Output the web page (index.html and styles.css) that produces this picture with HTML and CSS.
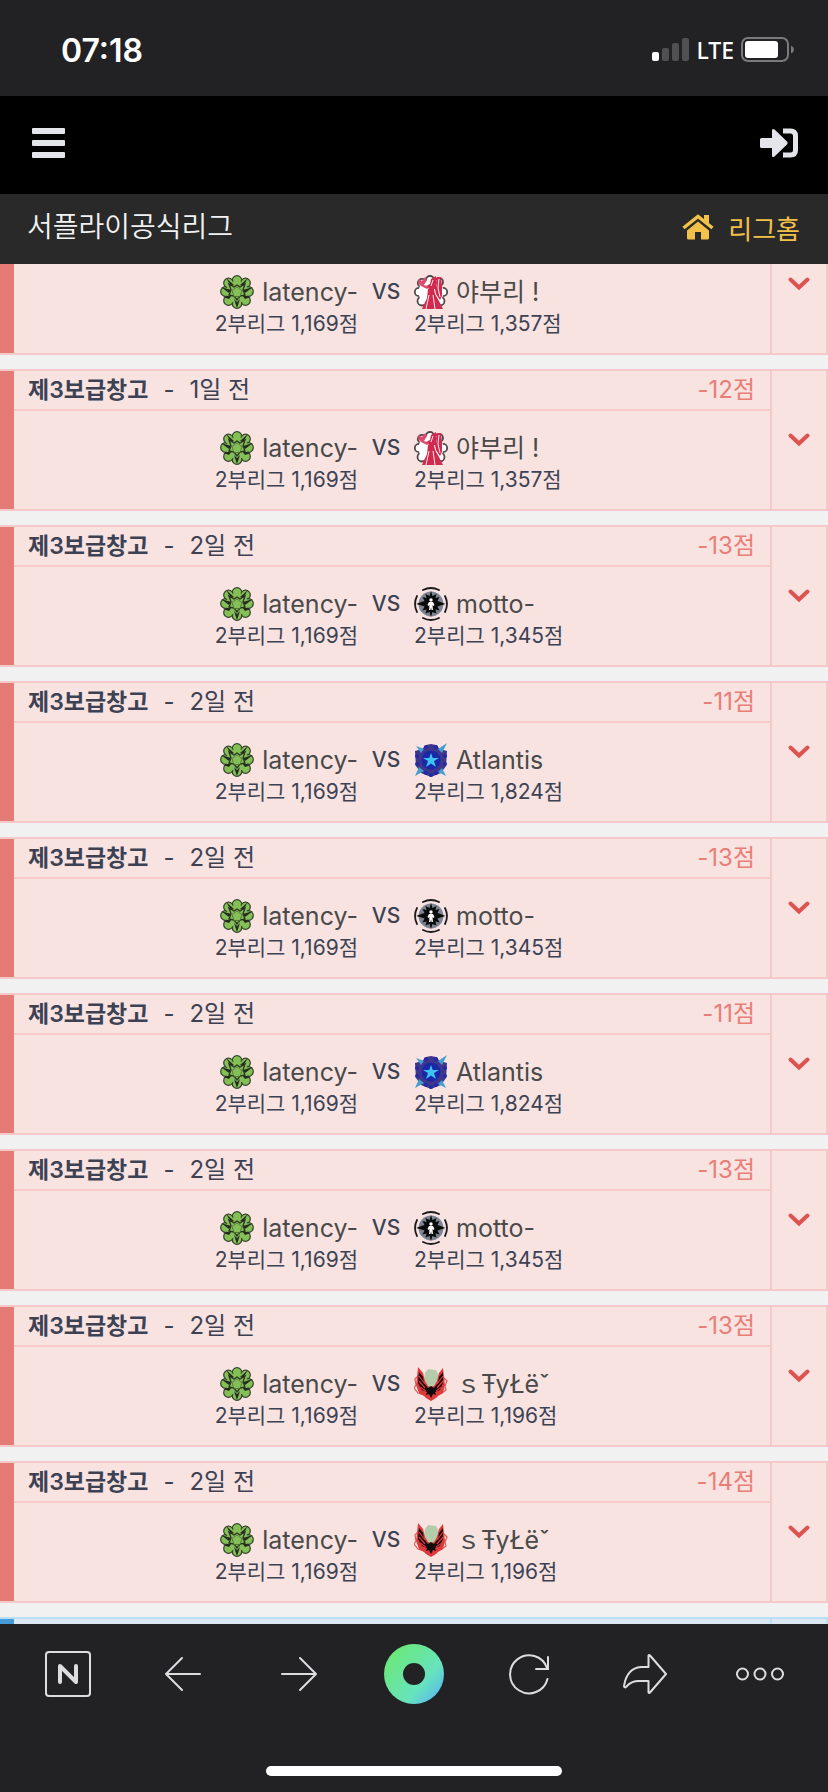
FILE: index.html
```html
<!DOCTYPE html>
<html lang="ko">
<head>
    <meta charset="UTF-8">
    <meta name="viewport" content="width=device-width, initial-scale=1.0">
    <title>서플라이공식리그</title>
    <link rel="stylesheet" href="styles.css">
</head>
<body>
    <!-- tier icons -->
    <svg class="symbols" aria-hidden="true">
        <symbol id="flower" viewBox="0 0 34 34">
            <g fill="#84bf58" stroke="#33402a" stroke-width="1.200">
                <circle cx="17" cy="5.500" r="4.800"/>
                <circle cx="25.500" cy="8" r="4.800"/>
                <circle cx="28.500" cy="16.500" r="4.800"/>
                <circle cx="25.500" cy="25.500" r="4.800"/>
                <circle cx="17" cy="28.500" r="4.800"/>
                <circle cx="8.500" cy="25.500" r="4.800"/>
                <circle cx="5.500" cy="16.500" r="4.800"/>
                <circle cx="8.500" cy="8" r="4.800"/>
            </g>
            <circle cx="17" cy="17" r="11" fill="#84bf58"/>
            <g fill="#25291f">
                <path d="M6 3l8 7-3 1z"/>
                <path d="M28 3l-8 7 3 1z"/>
                <path d="M1 12l10 3-2 3z"/>
                <path d="M33 12l-10 3 2 3z"/>
                <path d="M3 22l9-2-3 4z"/>
                <path d="M31 22l-9-2 3 4z"/>
                <path d="M14 24l3 3 3-3-3 9z"/>
            </g>
            <path d="M9 9l5 3 3-2 3 2 5-3-2 6 2 5-5 1-3 4-3-4-5-1 2-5z" fill="none" stroke="#2b3322" stroke-width="1.300"/>
            <path d="M17 12l5 3.500-2 6h-6l-2-6z" fill="#84bf58" stroke="#46632f" stroke-width=".7"/>
        </symbol>
        <symbol id="maiden" viewBox="0 0 34 34">
            <g fill="#fff" stroke="#50484a" stroke-width="1.800">
                <circle cx="16" cy="5" r="4"/>
                <circle cx="25" cy="7" r="4"/>
                <circle cx="29" cy="17" r="4.200"/>
                <circle cx="26" cy="26" r="4.500"/>
                <circle cx="8" cy="26" r="4.500"/>
                <circle cx="5" cy="17" r="4.200"/>
                <circle cx="8" cy="8" r="4.200"/>
            </g>
            <circle cx="17" cy="17" r="12.500" fill="#fff"/>
            <path d="M14 14h6l1 5 4 7 4 8H8l5-11z" fill="#d2294f"/>
            <path d="M17 4l5-3 1 7-1 6h-7l-3-3 4-2z" fill="#d2294f"/>
            <path d="M23 2h4l1 9 0 10-2 4-4-6-1-5 2-4z" fill="#d2294f"/>
            <path d="M5 4l3 2 3-4 2 3-3 5 5 2-2 2-6-3-3-3z" fill="#dd4c70"/>
            <path d="M15 20l-3 14M19 20l2 14M25 4l-1 9 2 9M19 5l-2 6" stroke="#fff" stroke-width=".9" fill="none"/>
        </symbol>
        <symbol id="dark" viewBox="0 0 34 34">
            <circle cx="17" cy="17" r="12.500" fill="#7d8594"/>
            <g fill="none" stroke="#1d1a1c" stroke-width="1.800" stroke-linecap="round">
                <path d="M9 3q8-4 16 0M9 31q8 4 16 0M3 9q-4 8 0 16M31 9q4 8 0 16"/>
            </g>
            <path d="M17 4l1.500 5 4-2-1 4 4-1-2 4 3 1 5 2-5 1.500-3 1 2 4-4-1 1 4-4-1.500L17 30l-1.500-5-4 1.500 1-4-4 1 2-4-3-1L2 17l5.500-2 3-1-2-4 4 1-1-4 4 2z" fill="#0b0a0b"/>
            <circle cx="17" cy="13" r="1.700" fill="#fff"/>
            <path d="M13.500 18l1.500-3h4l1.500 3-1 1-1-1 .5 5h-1.500l-.5-3-.5 3H15l.5-5-1 1z" fill="#fff"/>
        </symbol>
        <symbol id="shield" viewBox="0 0 34 34">
            <path d="M1 8l7-2 4-4 5-1 5 1 4 4 7 2-1 15-5 7-5 2-5 2-5-2-5-2-5-7z" fill="#3f3690"/>
            <g fill="#242aa4">
                <circle cx="12" cy="4" r="2"/><circle cx="22" cy="4" r="2"/><circle cx="3" cy="13" r="2"/>
                <circle cx="31" cy="13" r="2"/><circle cx="3" cy="21" r="2"/><circle cx="31" cy="21" r="2"/>
                <circle cx="12" cy="30" r="2"/><circle cx="22" cy="30" r="2"/><circle cx="17" cy="32" r="2"/>
            </g>
            <circle cx="17" cy="17" r="9.500" fill="#1929a5"/>
            <path d="M2 3l8 3-3 4zM33 0l-5 10-4-4zM1 33l4-9 5 4zM32 33l-8-4 4-4z" fill="#43a0ca"/>
            <path d="M17 10l1.800 5H25l-5 3 2 6-5-3.500L12 24l2-6-5-3h6.200z" fill="#3fc3f3"/>
        </symbol>
        <symbol id="phoenix" viewBox="0 0 34 34">
            <path d="M11 6l3-4 8 1 3 6 0 9-8 6-8-5z" fill="#b5ccaa"/>
            <path d="M5 8l-4 4 1 6-2 3 4 5 6 2M29 10l4 4-2 5 1 4-4 3-5 2" fill="none" stroke="#df5a55" stroke-width="1.200"/>
            <path d="M4 0l5 6 2 8 3 5 3 1 3-1 3-5 2-8 4-5 1 9 1 8-2 8-5 3-2 2-5 3-5-3-2-2-5-3-3-8 1-8z" fill="#df393b"/>
            <path d="M5 5l4 5 1 6 4 5 3-2 3 2 4-5 1-6 4-5 0 11-3 7-5 2 1 3-3-1-2 4-2-4-3 1 1-3-5-2-4-7z" fill="#120b0d"/>
            <path d="M5 9l6 8M5 14l6 7M6 20l6 4M29 9l-6 8M29 14l-6 7M28 20l-6 4" stroke="#df393b" stroke-width="1.200"/>
        </symbol>
        <symbol id="chevron" viewBox="0 0 22 14">
            <path d="M2.500 2.500l8.500 8 8.500-8" fill="none" stroke="currentColor" stroke-width="4" stroke-linecap="round" stroke-linejoin="miter"/>
        </symbol>
    </svg>

    <header class="status-bar">
        <span class="clock">07:18</span>
        <div class="status-icons">
            <svg width="37" height="24" viewBox="0 0 37 24">
                <rect x="0" y="14" width="7" height="9" rx="2" fill="#fff"/>
                <rect x="10" y="10" width="7" height="13" rx="2" fill="#505052"/>
                <rect x="20" y="5" width="7" height="18" rx="2" fill="#505052"/>
                <rect x="30" y="0" width="7" height="23" rx="2" fill="#505052"/>
            </svg>
            <span class="network">LTE</span>
            <svg width="53" height="26" viewBox="0 0 53 26">
                <rect x="1" y="1" width="46" height="23" rx="6" fill="none" stroke="#7a7a7c" stroke-width="2"/>
                <rect x="4" y="4" width="33" height="17" rx="3" fill="#fff"/>
                <path d="M50 8.500q3 1.500 3 4t-3 4z" fill="#7a7a7c"/>
            </svg>
        </div>
    </header>

    <nav class="top-nav">
        <button type="button" class="icon-button" aria-label="메뉴">
            <svg width="33" height="30" viewBox="0 0 33 30" fill="#e3e5ea">
                <rect y="0" width="33" height="6" rx="1"/>
                <rect y="12" width="33" height="6" rx="1"/>
                <rect y="24" width="33" height="6" rx="1"/>
            </svg>
        </button>
        <a href="#" class="icon-button" aria-label="로그인">
            <svg width="38" height="30" viewBox="0 0 38 30">
                <path d="M1.500 10H12V2.500q0-2.500 2.500-1L27 13.500q1.200 1.500 0 3L14.500 28.500Q12 30 12 27.500V20H1.500Q0 20 0 18.500v-7Q0 10 1.500 10z" fill="#e3e5ea"/>
                <path d="M23 3h7.500Q35.500 3 35.500 8v14q0 5-5 5H23" fill="none" stroke="#e3e5ea" stroke-width="5"/>
            </svg>
        </a>
    </nav>

    <div class="league-bar">
        <h1 class="league-name">서플라이공식리그</h1>
        <a href="#" class="league-home">
            <svg width="32" height="26" viewBox="0 0 32 26">
                <path d="M1.500 14L16 2.500 30.500 14" fill="none" stroke="#f2c14a" stroke-width="3.500"/>
                <path d="M22 1h5v9l-5-4z" fill="#f2c14a"/>
                <path d="M16 7.500l11 9V24q0 1.500-1.500 1.500H19V18h-6v7.500H6.500Q5 25.500 5 24v-7.500z" fill="#f2c14a"/>
            </svg>
            리그홈
        </a>
    </div>

    <main class="matches" id="matches"></main>

    <footer class="browser-bar">
        <div class="tools">
            <button type="button" aria-label="홈">
                <svg width="46" height="46" viewBox="0 0 46 46" fill="none" stroke="#dddde0">
                    <rect x="1" y="1" width="44" height="44" rx="3" stroke-width="2"/>
                    <path d="M15 31V15l16 16V15" stroke-width="4" stroke-linecap="round" stroke-linejoin="round"/>
                </svg>
            </button>
            <button type="button" aria-label="뒤로">
                <svg width="36" height="36" viewBox="0 0 36 36" fill="none" stroke="#dddde0" stroke-width="2" stroke-linecap="round" stroke-linejoin="round">
                    <path d="M35 18H1M17 2L1 18l16 16"/>
                </svg>
            </button>
            <button type="button" aria-label="앞으로">
                <svg width="36" height="36" viewBox="0 0 36 36" fill="none" stroke="#dddde0" stroke-width="2" stroke-linecap="round" stroke-linejoin="round">
                    <path d="M1 18h34M19 2l16 16-16 16"/>
                </svg>
            </button>
            <button type="button" aria-label="그린닷">
                <svg width="60" height="60" viewBox="0 0 60 60">
                    <defs>
                        <linearGradient id="dot" x1="0.100" y1="0.150" x2="0.900" y2="0.850">
                            <stop offset="0" stop-color="#6be878"/>
                            <stop offset="0.700" stop-color="#67e3bd"/>
                            <stop offset="1" stop-color="#5cbfe8"/>
                        </linearGradient>
                    </defs>
                    <circle cx="30" cy="30" r="30" fill="url(#dot)"/>
                    <circle cx="30" cy="30" r="11" fill="#222224"/>
                </svg>
            </button>
            <button type="button" aria-label="새로고침">
                <svg width="42" height="42" viewBox="0 0 42 42" fill="none" stroke="#dddde0" stroke-width="2" stroke-linecap="round">
                    <path d="M39.500 26A19 19 0 1 1 39 15M40 4v12H28"/>
                </svg>
            </button>
            <button type="button" aria-label="공유">
                <svg width="44" height="40" viewBox="0 0 44 40" fill="none" stroke="#dddde0" stroke-width="2" stroke-linejoin="round">
                    <path d="M25.500 1.500Q26 .5 27 1.500L43 20 27 38.500Q26 39.500 25.500 38.500V27H16Q8 27 3.500 32.500 1.500 34.500 1 32 4 14 18 13h7.500z"/>
                </svg>
            </button>
            <button type="button" aria-label="더보기">
                <svg width="48" height="14" viewBox="0 0 48 14" fill="none" stroke="#dddde0" stroke-width="2">
                    <circle cx="6.500" cy="7" r="5.500"/>
                    <circle cx="24" cy="7" r="5.500"/>
                    <circle cx="41.500" cy="7" r="5.500"/>
                </svg>
            </button>
        </div>
        <div class="home-indicator"></div>
    </footer>

    <script>
        const me = { name: 'latency-', icon: 'flower', point: '1,169' };
        const yaburi = { name: '야부리 !', icon: 'maiden', point: '1,357' };
        const motto = { name: 'motto-', icon: 'dark', point: '1,345' };
        const atlantis = { name: 'Atlantis', icon: 'shield', point: '1,824' };
        const style = { name: 'ｓŦyŁëˇ', icon: 'phoenix', point: '1,196' };

        const matches = [
            { rival: yaburi },
            { rival: yaburi, when: '1일 전', diff: '-12' },
            { rival: motto, when: '2일 전', diff: '-13' },
            { rival: atlantis, when: '2일 전', diff: '-11' },
            { rival: motto, when: '2일 전', diff: '-13' },
            { rival: atlantis, when: '2일 전', diff: '-11' },
            { rival: motto, when: '2일 전', diff: '-13' },
            { rival: style, when: '2일 전', diff: '-13' },
            { rival: style, when: '2일 전', diff: '-14' },
            { win: true }
        ];

        function playerHtml(player) {
            return `
                <div class="player">
                    <div class="player-name"><svg class="tier"><use href="#${player.icon}"/></svg>${player.name}</div>
                    <div class="player-point">2부리그 ${player.point}점</div>
                </div>`;
        }

        function headHtml(match) {
            return `<strong>제3보급창고</strong><span>-</span><span>${match.when}</span><span class="diff">${match.diff}점</span>`;
        }

        function bodyHtml(match) {
            return playerHtml(me) + '<div class="versus">VS</div>' + playerHtml(match.rival);
        }

        function matchHtml(match) {
            return `
                <article class="match ${match.win ? 'win' : ''}">
                    <div class="match-info">
                        <div class="match-head">${match.when ? headHtml(match) : ''}</div>
                        <div class="match-body">${match.rival ? bodyHtml(match) : ''}</div>
                    </div>
                    <button type="button" class="more" aria-label="펼치기"><svg width="22" height="14"><use href="#chevron"/></svg></button>
                </article>`;
        }

        const list = document.getElementById('matches');
        list.innerHTML = matches.map(matchHtml).join('');
        list.scrollTop = 51;
    </script>
</body>
</html>
```
FILE: styles.css
```css
* {
    box-sizing: border-box;
}

body {
    font-family: Inter, "Noto Sans CJK KR", sans-serif;
    background-color: #f1f1f1;
    color: #3c4254;
    display: flex;
    flex-direction: column;
    height: 100vh;
    margin: 0;
}

svg {
    display: block;
    flex: none;
}

button {
    background: none;
    border: none;
    padding: 0;
    cursor: pointer;
}

a {
    text-decoration: none;
}

.symbols {
    position: absolute;
    width: 0;
    height: 0;
}

.status-bar {
    background-color: #222224;
    color: white;
    display: flex;
    flex: none;
    justify-content: space-between;
    align-items: center;
    height: 96px;
    padding: 4px 34px 0 61px;
}

.clock {
    font-size: 32px;
    font-weight: 600;
}

.status-icons {
    display: flex;
    align-items: center;
    gap: 7px;
}

.network {
    font-family: "Noto Sans", sans-serif;
    font-size: 23px;
    font-weight: 500;
    line-height: 26px;
}

.top-nav {
    background-color: #000;
    display: flex;
    flex: none;
    justify-content: space-between;
    align-items: center;
    height: 98px;
    padding: 0 30px 4px 32px;
}

.league-bar {
    background-color: #292929;
    color: #f2f2f2;
    display: flex;
    flex: none;
    justify-content: space-between;
    align-items: center;
    height: 70px;
    padding: 0 28px 4px 27px;
}

.league-name {
    font-size: 28px;
    font-weight: 350;
    line-height: 40px;
    margin: 0;
}

.league-home {
    color: #f2c14a;
    display: flex;
    align-items: center;
    gap: 14px;
    font-size: 26px;
    font-weight: 400;
}

.matches {
    flex: 1;
    min-height: 0;
    overflow-y: auto;
    scrollbar-width: none;
}

.match {
    background-color: #f8e3e1;
    border: 2px solid #f5c9c9;
    border-left: none;
    display: flex;
    min-height: 142px;
    margin-bottom: 14px;
}

.match::before {
    content: "";
    background-color: #e57b75;
    width: 14px;
}

.match-info {
    flex: 1;
}

.match-head {
    border-bottom: 2px solid #f5c9c9;
    display: flex;
    align-items: center;
    gap: 15px;
    height: 40px;
    padding: 0 15px 0 14px;
    font-size: 24px;
    line-height: 38px;
}

.match-head strong {
    font-size: 23px;
    font-weight: 600;
}

.diff {
    color: #e97e78;
    margin-left: auto;
}

.match-body {
    display: grid;
    grid-template-columns: 1fr 56px 1fr;
    padding: 20px 12px 14px 0;
}

.player:first-child {
    justify-self: end;
}

.player-name {
    color: #4a4a4a;
    display: flex;
    align-items: center;
    gap: 8px;
    font-size: 25px;
    line-height: 34px;
}

.player:first-child .player-name {
    justify-content: flex-end;
}

.tier {
    width: 34px;
    height: 34px;
}

.player-point {
    font-size: 21px;
    line-height: 30px;
}

.versus {
    font-size: 21px;
    font-weight: 500;
    line-height: 34px;
    text-align: center;
}

.more {
    border-left: 2px solid #f5c9c9;
    color: #dd5350;
    display: flex;
    justify-content: center;
    align-items: center;
    width: 56px;
}

.win {
    background-color: #dbe7f1;
    border-color: #b9dff5;
}

.win::before {
    background-color: #479bd9;
}

.win .match-head,
.win .more {
    border-color: #b9dff5;
}

.win .diff,
.win .more {
    color: #479bd9;
}

.browser-bar {
    background-color: #222224;
    display: flex;
    flex: none;
    flex-direction: column;
    justify-content: space-between;
    align-items: center;
    height: 168px;
    padding: 20px 10px 16px;
}

.tools {
    display: flex;
    width: 100%;
}

.tools button {
    display: flex;
    flex: 1;
    justify-content: center;
    align-items: center;
    height: 60px;
}

.home-indicator {
    background-color: white;
    border-radius: 5px;
    width: 296px;
    height: 10px;
}
```
